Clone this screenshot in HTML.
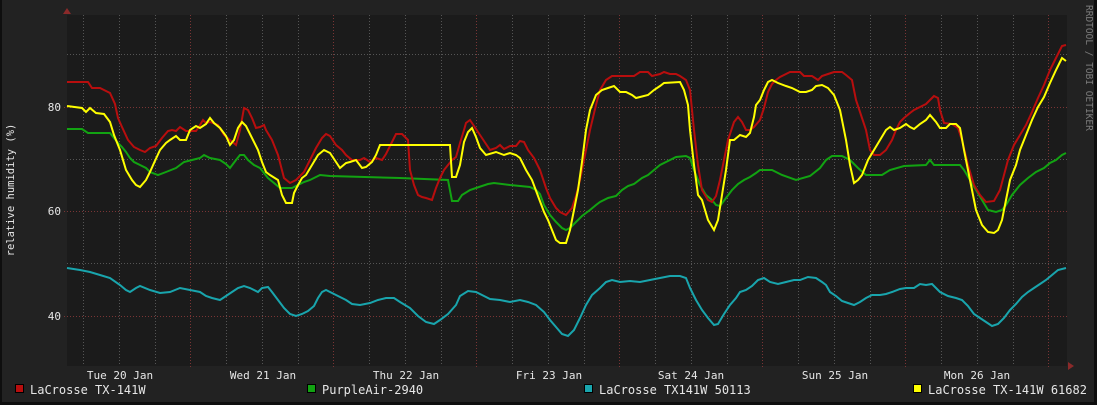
<!DOCTYPE html>
<html><head><meta charset="utf-8"><style>
html,body{margin:0;padding:0;background:#0e0e0e;}
svg{display:block}
text{font-family:"DejaVu Sans Mono","Liberation Mono",monospace;}
</style></head><body>
<svg width="1097" height="405" xmlns="http://www.w3.org/2000/svg">
<rect x="0" y="0" width="1097" height="405" fill="#0e0e0e"/>
<rect x="2" y="0" width="1092" height="402" fill="#222"/>
<rect x="67" y="15" width="1000" height="351" fill="#1b1b1b"/>
<g stroke="#555" stroke-width="1" stroke-dasharray="1,2">
<line x1="67" y1="263.5" x2="1067" y2="263.5"/>
<line x1="67" y1="159.5" x2="1067" y2="159.5"/>
<line x1="67" y1="54.5" x2="1067" y2="54.5"/>
<line x1="83.5" y1="15" x2="83.5" y2="366"/><line x1="119.5" y1="15" x2="119.5" y2="366"/><line x1="155.5" y1="15" x2="155.5" y2="366"/>
<line x1="226.5" y1="15" x2="226.5" y2="366"/><line x1="262.5" y1="15" x2="262.5" y2="366"/><line x1="298.5" y1="15" x2="298.5" y2="366"/>
<line x1="369.5" y1="15" x2="369.5" y2="366"/><line x1="405.5" y1="15" x2="405.5" y2="366"/><line x1="441.5" y1="15" x2="441.5" y2="366"/>
<line x1="512.5" y1="15" x2="512.5" y2="366"/><line x1="548.5" y1="15" x2="548.5" y2="366"/><line x1="584.5" y1="15" x2="584.5" y2="366"/>
<line x1="655.5" y1="15" x2="655.5" y2="366"/><line x1="691.5" y1="15" x2="691.5" y2="366"/><line x1="727.5" y1="15" x2="727.5" y2="366"/>
<line x1="798.5" y1="15" x2="798.5" y2="366"/><line x1="834.5" y1="15" x2="834.5" y2="366"/><line x1="870.5" y1="15" x2="870.5" y2="366"/>
<line x1="941.5" y1="15" x2="941.5" y2="366"/><line x1="977.5" y1="15" x2="977.5" y2="366"/><line x1="1013.5" y1="15" x2="1013.5" y2="366"/>
</g>
<g stroke="#7a3535" stroke-width="1" stroke-dasharray="1,2">
<line x1="64" y1="107.5" x2="1067" y2="107.5"/>
<line x1="64" y1="211.5" x2="1067" y2="211.5"/>
<line x1="64" y1="316.5" x2="1067" y2="316.5"/>
<line x1="190.5" y1="15" x2="190.5" y2="369"/><line x1="333.5" y1="15" x2="333.5" y2="369"/><line x1="476.5" y1="15" x2="476.5" y2="369"/>
<line x1="619.5" y1="15" x2="619.5" y2="369"/><line x1="762.5" y1="15" x2="762.5" y2="369"/><line x1="905.5" y1="15" x2="905.5" y2="369"/><line x1="1048.5" y1="15" x2="1048.5" y2="369"/>
</g>
<polygon points="63,14 67,8 71,14" fill="#8a2a2a"/>
<polygon points="1068,362 1074,366 1068,370" fill="#8a2a2a"/>
<g fill="none" stroke-width="2" stroke-linejoin="miter">
<polyline stroke="#19a5ad" points="67,268 80,270 90,272 100,275 110,278 120,285 126,290 130,292 136,288 140,286 150,290 160,293 170,292 180,288 190,290 200,292 206,296 212,298 220,300 226,296 232,292 238,288 244,286 250,288 258,292 262,288 268,287 272,292 278,300 284,308 290,314 296,316 302,314 308,311 314,306 318,298 322,292 326,290 332,293 340,297 346,300 352,304 360,305 370,303 378,300 386,298 394,298 400,302 410,308 418,316 426,322 434,324 440,320 448,314 456,305 460,296 468,291 476,292 484,296 490,299 500,300 510,302 520,300 528,302 536,305 544,312 550,320 556,327 562,334 568,336 574,330 580,318 586,305 592,295 600,288 606,282 612,280 620,282 630,281 640,282 650,280 660,278 670,276 680,276 686,278 690,288 696,300 702,310 708,318 714,325 718,324 724,314 730,305 736,298 740,292 746,290 752,286 758,280 764,278 770,282 778,284 786,282 794,280 800,280 808,277 816,278 822,282 826,285 830,292 836,296 842,301 848,303 854,305 860,302 866,298 872,295 880,295 886,294 892,292 900,289 906,288 914,288 920,284 926,285 932,284 940,292 948,296 956,298 962,300 968,306 974,314 980,318 986,322 992,326 998,324 1004,318 1010,310 1016,304 1022,297 1028,292 1034,288 1040,284 1046,280 1052,275 1058,270 1066,268"/>
<polyline stroke="#12a312" points="67,129 82,129 88,133 110,133 114,138 118,143 122,147 126,152 130,158 134,162 140,165 146,168 150,172 158,175 166,172 176,168 180,165 184,162 192,160 200,158 204,155 210,158 220,160 226,164 230,168 236,160 240,155 244,155 248,160 254,165 260,168 268,178 280,188 292,188 298,185 304,182 310,180 320,175 330,176 400,178 448,180 452,201 458,201 462,195 470,190 476,188 482,186 488,184 494,183 510,185 530,187 536,190 540,194 544,205 550,215 556,222 562,228 566,230 570,228 576,222 582,216 590,210 596,205 600,202 608,198 616,196 622,190 628,186 634,184 642,178 648,175 654,170 660,165 670,160 676,157 686,156 690,158 694,170 700,185 706,195 712,200 716,205 720,206 726,198 732,190 738,184 744,180 750,177 756,173 760,170 772,170 782,175 796,180 810,176 820,168 826,160 832,156 842,156 850,160 858,168 866,175 882,175 890,170 904,166 926,165 930,160 934,165 960,165 964,170 970,180 976,190 982,200 988,210 996,212 1002,210 1006,205 1012,195 1020,185 1028,178 1036,172 1044,168 1050,163 1056,160 1062,155 1066,153"/>
<polyline stroke="#b80e0e" points="67,82 88,82 92,88 100,88 104,90 110,93 115,104 118,118 122,127 128,140 134,147 140,150 145,152 150,148 156,146 162,138 168,131 172,130 176,131 180,127 186,131 196,131 200,125 203,120 206,123 210,122 218,125 224,135 230,140 236,145 240,130 244,108 248,110 252,118 256,128 260,127 264,125 266,130 272,140 278,155 284,178 290,183 296,180 304,172 310,160 316,148 322,138 326,134 330,136 336,145 342,150 346,155 352,160 360,160 364,158 370,162 376,158 382,160 386,154 390,146 396,134 402,134 408,140 410,170 414,185 418,195 422,197 426,198 432,200 436,188 440,178 444,170 448,165 452,160 456,157 460,143 464,130 466,123 470,120 474,126 480,135 486,144 490,150 496,148 500,145 504,149 510,146 516,146 520,141 524,142 528,150 534,158 540,170 546,188 550,198 556,208 560,212 566,215 572,208 576,196 580,180 584,160 590,130 596,105 600,90 606,80 612,76 634,76 640,72 648,72 652,76 660,74 664,72 670,74 676,74 680,76 686,80 690,90 694,130 698,165 702,190 708,200 712,202 716,196 720,180 724,160 728,140 734,122 738,117 742,122 746,130 750,130 754,127 760,120 764,108 768,92 772,84 776,80 780,77 786,74 790,72 800,72 804,76 812,76 818,80 822,76 828,74 834,72 842,72 846,75 852,80 856,100 862,118 866,130 870,150 874,155 880,155 886,150 892,140 896,130 900,122 904,118 910,113 914,110 918,108 922,106 926,104 930,100 934,96 938,98 940,110 944,123 952,124 958,128 962,140 968,165 974,185 980,195 986,202 994,201 1000,190 1004,175 1008,160 1014,145 1020,135 1026,125 1032,112 1038,98 1044,85 1050,70 1056,58 1062,46 1066,45"/>
<polyline stroke="#ffff00" points="67,106 82,108 86,112 90,108 96,113 104,114 110,122 114,135 120,150 126,170 132,180 136,185 140,187 146,180 150,172 154,163 160,150 166,143 170,140 176,136 180,140 186,140 190,130 196,126 200,128 206,124 210,118 214,123 220,128 226,136 230,145 234,140 238,128 242,122 246,126 252,138 258,150 262,162 266,172 270,175 278,180 282,195 286,203 292,203 294,193 298,185 302,178 306,175 312,165 318,155 324,150 330,153 336,162 340,168 346,163 350,162 356,160 362,168 366,167 372,162 376,155 380,145 450,145 452,177 456,177 460,165 464,142 468,132 472,128 476,137 480,148 486,155 496,152 504,155 510,153 516,155 520,158 526,170 532,180 538,196 544,212 548,220 552,230 556,240 560,243 566,243 570,230 574,210 578,190 582,162 586,130 590,110 596,95 602,90 608,88 614,86 620,92 626,92 632,95 636,98 640,97 648,95 654,90 660,86 664,83 680,82 684,90 688,105 690,130 694,165 698,195 702,200 708,220 714,230 718,220 722,195 726,170 730,140 734,140 740,135 746,137 750,133 754,117 756,105 760,100 764,90 768,82 772,80 778,83 786,86 792,88 800,92 806,92 812,90 816,86 822,85 828,88 834,95 840,110 846,140 850,165 854,183 858,180 862,175 868,160 874,150 880,140 886,130 890,127 894,130 900,128 906,124 910,127 914,129 920,124 926,120 930,115 936,122 940,128 946,128 950,124 956,124 960,128 964,150 968,170 972,190 976,210 982,225 988,232 994,233 998,230 1002,220 1006,200 1010,180 1016,165 1020,150 1026,135 1032,120 1038,107 1044,97 1050,83 1056,70 1060,62 1062,58 1066,61"/>
</g>
<g fill="#e6e6e6" font-size="11">
<text x="61" y="111" text-anchor="end">80</text>
<text x="61" y="215" text-anchor="end">60</text>
<text x="61" y="320" text-anchor="end">40</text>
<text x="120" y="379" text-anchor="middle">Tue 20 Jan</text>
<text x="263" y="379" text-anchor="middle">Wed 21 Jan</text>
<text x="406" y="379" text-anchor="middle">Thu 22 Jan</text>
<text x="549" y="379" text-anchor="middle">Fri 23 Jan</text>
<text x="691" y="379" text-anchor="middle">Sat 24 Jan</text>
<text x="835" y="379" text-anchor="middle">Sun 25 Jan</text>
<text x="977" y="379" text-anchor="middle">Mon 26 Jan</text>
<text transform="translate(14,190) rotate(-90)" text-anchor="middle" font-size="10.5">relative humidity (%)</text>
</g>
<text transform="translate(1086,5) rotate(90)" fill="#7a7a7a" font-size="9.5">RRDTOOL / TOBI OETIKER</text>
<g font-size="12" fill="#e6e6e6">
<rect x="15.5" y="384.5" width="8" height="8" fill="#b80e0e" stroke="#000"/>
<text x="30" y="394">LaCrosse TX-141W</text>
<rect x="307.5" y="384.5" width="8" height="8" fill="#12a312" stroke="#000"/>
<text x="322" y="394">PurpleAir-2940</text>
<rect x="584.5" y="384.5" width="8" height="8" fill="#19a5ad" stroke="#000"/>
<text x="599" y="394">LaCrosse TX141W 50113</text>
<rect x="913.5" y="384.5" width="8" height="8" fill="#ffff00" stroke="#000"/>
<text x="928" y="394">LaCrosse TX-141W 61682</text>
</g>
</svg>
</body></html>
